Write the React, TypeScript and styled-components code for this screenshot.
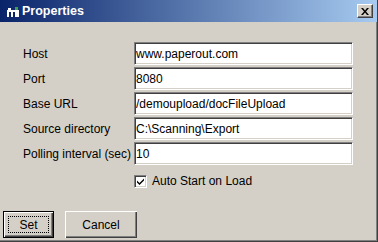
import React, {FC, useState} from 'react';
import styled, {createGlobalStyle} from "styled-components";

const GlobalStyle = createGlobalStyle`
  html, body {
    margin: 0;
    padding: 0;
    background: #D4D0C8;
  }
  body {
    font-family: "Liberation Sans", Arial, sans-serif;
    font-size: 12px;
    color: #000000;
  }
`

interface IField {
    label: string
    value: string
}

const fields: IField[] = [
    {label: 'Host', value: 'www.paperout.com'},
    {label: 'Port', value: '8080'},
    {label: 'Base URL', value: '/demoupload/docFileUpload'},
    {label: 'Source directory', value: 'C:\\Scanning\\Export'},
    {label: 'Polling interval (sec)', value: '10'},
]

const AppIcon: FC = () => (
    <svg width="12" height="11" viewBox="0 0 12 11">
        <rect x="0" y="4" width="12" height="7" fill="#ffffff"/>
        <rect x="2" y="6" width="2" height="5" fill="#0A246A"/>
        <rect x="6" y="6" width="2" height="5" fill="#0A246A"/>
        <rect x="8" y="1" width="3" height="3" fill="#3fa34d"/>
        <rect x="1" y="2" width="3" height="2" fill="#ffffff"/>
    </svg>
)

const App: FC = () => {
    const [autoStart, setAutoStart] = useState<boolean>(true)

    return (
        <>
            <GlobalStyle/>
            <Window>
                <TitleBar>
                    <TitleLeft>
                        <AppIcon/>
                        <Title>Properties</Title>
                    </TitleLeft>
                    <CloseButton>
                        <svg width="8" height="7" viewBox="0 0 8 7">
                            <path d="M0 0h2l2 2.5L6 0h2L5 3.5 8 7H6L4 4.5 2 7H0l3-3.5z" fill="#000"/>
                        </svg>
                    </CloseButton>
                </TitleBar>
                <Body>
                    <Form>
                        {fields.map(f => (
                            <React.Fragment key={f.label}>
                                <Label>{f.label}</Label>
                                <Input defaultValue={f.value}/>
                            </React.Fragment>
                        ))}
                        <span/>
                        <CheckRow onClick={() => setAutoStart(prev => !prev)}>
                            <CheckBox>
                                {autoStart &&
                                    <svg width="7" height="7" viewBox="0 0 7 7">
                                        <path d="M0 2.5l2.5 2.5L7 0.5V2.5L2.5 7 0 4.5z" fill="#000"/>
                                    </svg>}
                            </CheckBox>
                            Auto Start on Load
                        </CheckRow>
                    </Form>
                    <Footer>
                        <Button isDefault>
                            <Focus>Set</Focus>
                        </Button>
                        <Button>Cancel</Button>
                    </Footer>
                </Body>
            </Window>
        </>
    )
}

export default App;

const Window = styled.div`
  width: 378px;
  height: 242px;
  box-sizing: border-box;
  display: flex;
  flex-direction: column;
  background: #D4D0C8;
  border-right: 1px solid #404040;
  border-bottom: 1px solid #404040;
  box-shadow: inset -1px -1px 0 #808080;
`
const TitleBar = styled.div`
  height: 22px;
  flex-shrink: 0;
  display: flex;
  align-items: center;
  justify-content: space-between;
  padding: 0 4px 0 7px;
  background: linear-gradient(to right, #0A246A, #A6CAF0);
`
const TitleLeft = styled.div`
  display: flex;
  align-items: center;
  gap: 3px;
`
const Title = styled.span`
  color: #ffffff;
  font-weight: bold;
  font-size: 12.5px;
`
const CloseButton = styled.div`
  width: 16px;
  height: 14px;
  box-sizing: border-box;
  display: flex;
  align-items: center;
  justify-content: center;
  background: #D4D0C8;
  border-top: 1px solid #ffffff;
  border-left: 1px solid #ffffff;
  border-right: 1px solid #404040;
  border-bottom: 1px solid #404040;
  box-shadow: inset -1px -1px 0 #808080;
`
const Body = styled.div`
  flex: 1;
  display: flex;
  flex-direction: column;
  justify-content: space-between;
  padding: 20px 0 3px 3px;
`
const Form = styled.div`
  display: grid;
  grid-template-columns: 111px 219px;
  row-gap: 2px;
  align-items: center;
  margin-left: 20px;
`
const Label = styled.div`
  font-size: 12px;
  white-space: nowrap;
`
const Input = styled.input`
  height: 23px;
  width: 219px;
  box-sizing: border-box;
  margin: 0;
  padding: 0 0 0 1px;
  font-family: "Liberation Sans", Arial, sans-serif;
  font-size: 12px;
  color: #000;
  background: #ffffff;
  outline: none;
  border-top: 1px solid #808080;
  border-left: 1px solid #808080;
  border-right: 1px solid #ffffff;
  border-bottom: 1px solid #ffffff;
  box-shadow: inset 1px 1px 0 #404040, inset -1px -1px 0 #D4D0C8;
`
const CheckRow = styled.label`
  display: flex;
  align-items: center;
  gap: 5px;
  margin-top: 7px;
  font-size: 12px;
  cursor: default;
`
const CheckBox = styled.span`
  width: 13px;
  height: 13px;
  box-sizing: border-box;
  display: flex;
  align-items: center;
  justify-content: center;
  background: #ffffff;
  border-top: 1px solid #808080;
  border-left: 1px solid #808080;
  border-right: 1px solid #ffffff;
  border-bottom: 1px solid #ffffff;
  box-shadow: inset 1px 1px 0 #404040, inset -1px -1px 0 #D4D0C8;
`
const Footer = styled.div`
  display: flex;
  gap: 11px;
`
const Button = styled.div<{ isDefault?: boolean }>`
  width: ${({isDefault}) => isDefault ? '51px' : '72px'};
  height: 27px;
  box-sizing: border-box;
  display: flex;
  align-items: center;
  justify-content: center;
  font-size: 12px;
  background: #D4D0C8;
  padding: ${({isDefault}) => isDefault ? '4px' : '0'};
  border: ${({isDefault}) => isDefault ? '1px solid #000' : 'none'};
  box-shadow: inset 1px 1px 0 #ffffff, inset -1px -1px 0 #404040, inset -2px -2px 0 #808080;
`
const Focus = styled.div`
  width: 100%;
  height: 100%;
  box-sizing: border-box;
  display: flex;
  align-items: center;
  justify-content: center;
  border: 1px dotted #000;
`
